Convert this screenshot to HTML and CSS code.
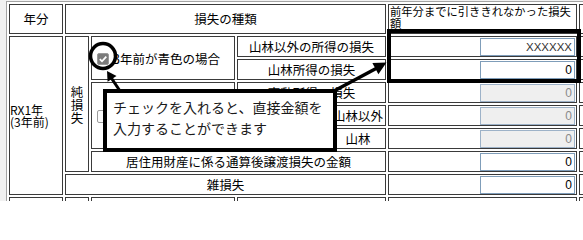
FILE: index.html
```html
<!DOCTYPE html>
<html lang="ja">
<head>
<meta charset="utf-8">
<title>損失額</title>
<link rel="stylesheet" href="styles.css">
</head>
<body>
<div class="page">
  <table class="grid">
    <colgroup>
      <col class="c1"><col class="c2"><col class="c3"><col class="c4a"><col class="c4b"><col class="c5"><col class="c6">
    </colgroup>
    <tr class="hdr">
      <td>年分</td>
      <td colspan="4">損失の種類</td>
      <td class="hcol">前年分までに引ききれなかった損失<br>額</td>
      <td></td>
    </tr>
    <tr>
      <td rowspan="7" class="year">RX1年<br>(3年前)</td>
      <td rowspan="6" class="vert">純<br>損<br>失</td>
      <td rowspan="2" class="chk"><svg class="cb" width="12" height="12" viewBox="0 0 12 12"><rect x="0.5" y="0.5" width="11" height="11" rx="1.5" fill="#7b7b7b" stroke="#9a9a9a"/><path d="M2.8 6.1 L5 8.3 L9.3 3.6" fill="none" stroke="#fff" stroke-width="1.8"/></svg><span>3年前が青色の場合</span></td>
      <td colspan="2">山林以外の所得の損失</td>
      <td class="val"><input class="inp xs" type="text" value="XXXXXX" readonly></td>
      <td></td>
    </tr>
    <tr>
      <td colspan="2">山林所得の損失</td>
      <td class="val"><input class="inp" type="text" value="0" readonly></td>
      <td></td>
    </tr>
    <tr>
      <td rowspan="3" class="chk"><svg class="cb" width="13" height="13" viewBox="0 0 13 13"><rect x="0.5" y="0.5" width="12" height="12" rx="1.5" fill="#fbfbfb" stroke="#9c9c9c"/></svg><span class="under">3年前が白色の場合</span></td>
      <td colspan="2">変動所得の損失</td>
      <td class="val"><input class="inp dis" type="text" value="0" disabled></td>
      <td></td>
    </tr>
    <tr>
      <td rowspan="2"><span class="under">被災事業用資産の損失</span></td>
      <td>山林以外</td>
      <td class="val"><input class="inp dis" type="text" value="0" disabled></td>
      <td></td>
    </tr>
    <tr>
      <td>山林</td>
      <td class="val"><input class="inp dis" type="text" value="0" disabled></td>
      <td></td>
    </tr>
    <tr>
      <td colspan="3">居住用財産に係る通算後譲渡損失の金額</td>
      <td class="val"><input class="inp" type="text" value="0" readonly></td>
      <td></td>
    </tr>
    <tr>
      <td colspan="4">雑損失</td>
      <td class="val"><input class="inp" type="text" value="0" readonly></td>
      <td></td>
    </tr>
    <tr>
      <td></td><td></td><td></td><td colspan="2"></td><td></td><td></td>
    </tr>
  </table>

  <div class="callout">チェックを入れると、直接金額を<br>入力することができます</div>

  <svg class="marks" width="583" height="201" viewBox="0 0 583 201">
    <circle cx="103" cy="56" r="12.5" fill="none" stroke="#000" stroke-width="3.5"/>
    <line x1="120" y1="91" x2="111" y2="77.5" stroke="#000" stroke-width="3"/>
    <polygon points="107,71 116.5,76 107.6,81.8" fill="#000"/>
    <line x1="334" y1="91" x2="377" y2="68" stroke="#000" stroke-width="3.5"/>
    <polygon points="386.5,62.5 378.4,74.2 372.4,63" fill="#000"/>
    <rect x="389" y="31" width="190" height="50" fill="none" stroke="#000" stroke-width="4"/>
  </svg>
</div>
</body>
</html>
```

FILE: styles.css
```css
html, body {
  margin: 0;
  padding: 0;
}
body {
  background: #fff;
  overflow: hidden;
  font-family: "Noto Sans CJK JP", "Noto Sans", sans-serif;
  font-size: 12.5px;
  color: #000;
}
.page {
  position: relative;
  width: 583px;
  height: 201px;
  overflow: hidden;
  background: #f1f1f1;
}
.grid {
  margin: 1px 0 0 6px;
  border: 1px solid #a3a3a3;
  border-collapse: separate;
  border-spacing: 2px;
  background: #fff;
  table-layout: fixed;
  width: 676px;
}
.c1 { width: 54px; }
.c2 { width: 24px; }
.c3 { width: 144px; }
.c4a { width: 91px; }
.c4b { width: 56px; }
.c5 { width: 189px; }
.c6 { width: 100px; }
.grid tr { height: 21px; }
.grid tr.hdr { height: 30px; }
.grid td {
  box-sizing: border-box;
  border: 1px solid #3a3a3a;
  padding: 0;
  line-height: 14px;
  text-align: center;
  vertical-align: middle;
  overflow: hidden;
  white-space: normal;
}
.grid td.hcol {
  text-align: left;
  vertical-align: top;
  font-size: 11.3px;
  line-height: 12px;
  padding: 0 0 0 1px;
  white-space: nowrap;
}
.grid td.year {
  text-align: left;
  font-size: 12px;
  line-height: 12px;
  padding-left: 0;
}
.grid td.vert {
  line-height: 13px;
}
.grid td.chk {
  text-align: left;
  padding-left: 5px;
  white-space: nowrap;
}
.cb {
  display: inline-block;
  vertical-align: middle;
  margin-right: 4px;
}
.chk span {
  vertical-align: middle;
}
.under {
  visibility: hidden;
}
.grid td.val {
  vertical-align: top;
  padding: 1px 1px 0 0;
}
.inp {
  display: block;
  margin-left: auto;
  width: 95px;
  height: 18px;
  box-sizing: border-box;
  border: 1px solid #7f9db9;
  background: #fff;
  padding: 0 2px 0 0;
  font-family: "Liberation Sans", Arial, sans-serif;
  font-size: 12px;
  text-align: right;
  color: #000;
  outline: none;
}
.inp.xs {
  color: #333;
  font-size: 11.5px;
}
.inp.dis {
  background: #efefef;
  border-color: #9db2c8;
  color: #8a8a8a;
}
.callout {
  position: absolute;
  left: 103px;
  top: 89px;
  width: 234px;
  height: 63px;
  box-sizing: border-box;
  border: 4px solid #000;
  background: #fff;
  font-size: 14px;
  line-height: 21px;
  padding: 4px 0 0 6px;
  white-space: nowrap;
  color: #1a1a1a;
}
.marks {
  position: absolute;
  left: 0;
  top: 0;
  pointer-events: none;
}
```
